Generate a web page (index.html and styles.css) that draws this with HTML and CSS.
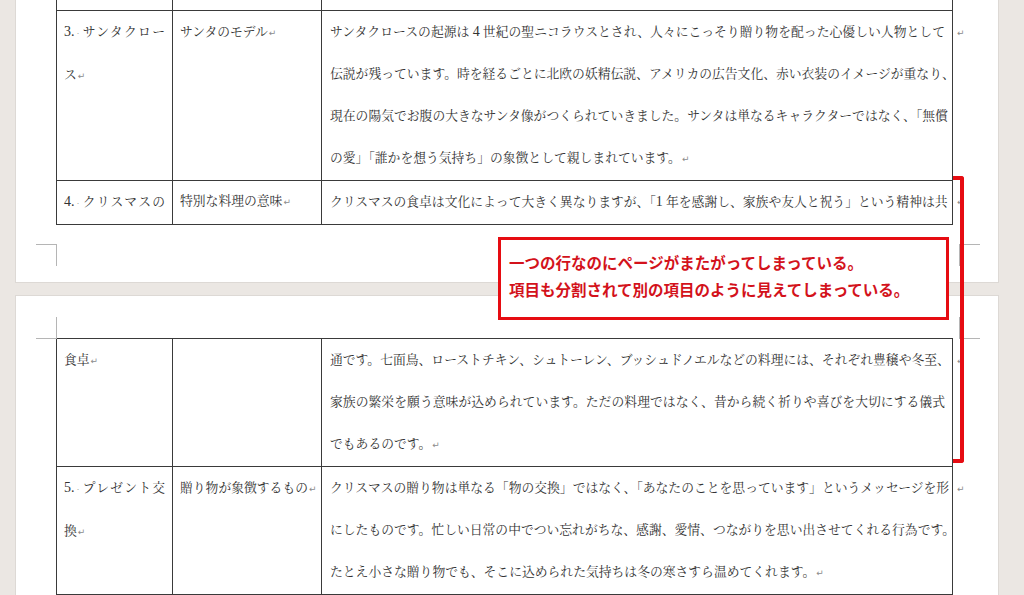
FILE: index.html
```html
<!DOCTYPE html>
<html lang="ja">
<head>
	<meta charset="UTF-8">
	<title>クリスマスの表</title>
	<link rel="stylesheet" href="styles.css">
</head>
<body>
	<div class="page page-one">
		<table class="doc-table">
			<colgroup><col class="w1"><col class="w2"><col class="w3"><col class="w4"></colgroup>
			<tr class="cut cut-top"><td></td><td></td><td></td><td class="end"></td></tr>
			<tr>
				<td><span class="ln spread"><span class="num">3.</span><span class="sp">·</span>サンタクロー</span><span class="ln">ス<span class="pm">↵</span></span></td>
				<td class="c2">サンタのモデル<span class="pm">↵</span></td>
				<td class="c3">
					<span class="ln full">サンタクロースの起源は <span class="num">4</span> 世紀の聖ニコラウスとされ、人々にこっそり贈り物を配った心優しい人物として</span>
					<span class="ln full">伝説が残っています。時を経るごとに北欧の妖精伝説、アメリカの広告文化、赤い衣装のイメージが重なり、</span>
					<span class="ln full">現在の陽気でお腹の大きなサンタ像がつくられていきました。サンタは単なるキャラクターではなく、「無償</span>
					<span class="ln">の愛」「誰かを想う気持ち」の象徴として親しまれています。<span class="pm">↵</span></span>
				</td>
				<td class="end"><span class="pm">↵</span></td>
			</tr>
			<tr class="short">
				<td><span class="ln spread"><span class="num">4.</span><span class="sp">·</span>クリスマスの</span></td>
				<td class="c2">特別な料理の意味<span class="pm">↵</span></td>
				<td class="c3">
					<span class="ln full">クリスマスの食卓は文化によって大きく異なりますが、「<span class="num">1</span> 年を感謝し、家族や友人と祝う」という精神は共</span>
				</td>
				<td class="end"><span class="pm">↵</span></td>
			</tr>
		</table>
		<div class="marks">
			<div class="mark mark-l"></div>
			<div class="mark mark-r"></div>
		</div>
	</div>

	<div class="page page-two">
		<div class="marks">
			<div class="mark mark-l"></div>
			<div class="mark mark-r"></div>
		</div>
		<table class="doc-table">
			<colgroup><col class="w1"><col class="w2"><col class="w3"><col class="w4"></colgroup>
			<tr>
				<td><span class="ln">食卓<span class="pm">↵</span></span></td>
				<td class="c2"></td>
				<td class="c3">
					<span class="ln full">通です。七面鳥、ローストチキン、シュトーレン、ブッシュドノエルなどの料理には、それぞれ豊穣や冬至、</span>
					<span class="ln full">家族の繁栄を願う意味が込められています。ただの料理ではなく、昔から続く祈りや喜びを大切にする儀式</span>
					<span class="ln">でもあるのです。<span class="pm">↵</span></span>
				</td>
				<td class="end"><span class="pm">↵</span></td>
			</tr>
			<tr>
				<td><span class="ln spread"><span class="num">5.</span><span class="sp">·</span>プレゼント交</span><span class="ln">換<span class="pm">↵</span></span></td>
				<td class="c2">贈り物が象徴するもの<span class="pm">↵</span></td>
				<td class="c3">
					<span class="ln full">クリスマスの贈り物は単なる「物の交換」ではなく、「あなたのことを思っています」というメッセージを形</span>
					<span class="ln full">にしたものです。忙しい日常の中でつい忘れがちな、感謝、愛情、つながりを思い出させてくれる行為です。</span>
					<span class="ln">たとえ小さな贈り物でも、そこに込められた気持ちは冬の寒さすら温めてくれます。<span class="pm">↵</span></span>
				</td>
				<td class="end"><span class="pm">↵</span></td>
			</tr>
			<tr class="cut"><td></td><td></td><td></td><td class="end"></td></tr>
		</table>
	</div>

	<div class="callout">
		一つの行なのにページがまたがってしまっている。<br>
		項目も分割されて別の項目のように見えてしまっている。
	</div>
	<div class="bracket"></div>
</body>
</html>
```

FILE: styles.css
```css
html, body {
	margin: 0;
	height: 595px;
	overflow: hidden;
}
body {
	position: relative;
	background-color: #ebe7e3;
	font-family: "Liberation Serif", "Noto Serif CJK JP", "Noto Sans CJK JP", serif;
	color: #333;
}
.page {
	background-color: #fff;
	margin-left: 16px;
	width: 982px;
	box-shadow: 0 0 0 1px #ddd9d5;
}
.page-one {
	height: 282px;
}
.page-two {
	margin-top: 14px;
	height: 299px;
	overflow: hidden;
}
.doc-table {
	border-collapse: collapse;
	table-layout: fixed;
	width: 916px;
	margin-left: 40px;
}
.w1 { width: 116px; }
.w2 { width: 149px; }
.w3 { width: 631px; }
.w4 { width: 20px; }
.doc-table td {
	border: 1px solid #3a3a3a;
	vertical-align: top;
	padding: 0 7px;
	font-size: 12.8px;
	line-height: 42px;
}
.doc-table td.c3 {
	padding: 0 7px 0 8px;
}
.doc-table td.c2 {
	white-space: nowrap;
	padding: 0 4px 0 7px;
}
.doc-table td.end {
	border: none;
	padding: 0 0 0 3px;
}
.cut td {
	height: 10px;
	line-height: 10px;
	border-bottom: none;
}
.cut-top td {
	border-top: none;
	border-bottom: 1px solid #3a3a3a;
}
.short td {
	line-height: 41px;
}
.ln {
	display: block;
	white-space: nowrap;
}
.ln.full, .ln.spread {
	text-align: justify;
	text-align-last: justify;
}
.num {
	font-size: 14px;
}
.sp {
	color: #888;
	font-size: 9px;
	padding: 0 2px;
}
.pm {
	font-family: "DejaVu Sans", sans-serif;
	font-size: 9px;
	color: #8c8c8c;
	margin-left: 1px;
}
.marks {
	display: flex;
	justify-content: space-between;
	padding: 0 18px 0 20px;
}
.mark {
	width: 20px;
	height: 21px;
	border: 0 solid #b5b5b5;
}
.page-one .marks {
	margin-top: 19px;
}
.page-one .mark-l {
	border-top-width: 1px;
	border-right-width: 1px;
}
.page-one .mark-r {
	border-top-width: 1px;
	border-left-width: 1px;
}
.page-two .marks {
	padding-top: 21px;
	margin-bottom: -1px;
}
.page-two .mark-l {
	border-bottom-width: 1px;
	border-right-width: 1px;
}
.page-two .mark-r {
	border-bottom-width: 1px;
	border-left-width: 1px;
}
.callout {
	position: absolute;
	left: 498px;
	top: 237px;
	width: 437px;
	padding: 9px 0 14px 8px;
	border: 3px solid #e60c12;
	background-color: #fff;
	color: #d3121b;
	font-family: "Noto Sans CJK JP", sans-serif;
	font-weight: bold;
	font-size: 15.5px;
	line-height: 27px;
}
.bracket {
	position: absolute;
	left: 953px;
	top: 176px;
	width: 7px;
	height: 279px;
	border: 4px solid #e60c12;
	border-left: none;
	border-radius: 0 3px 3px 0;
}
```
